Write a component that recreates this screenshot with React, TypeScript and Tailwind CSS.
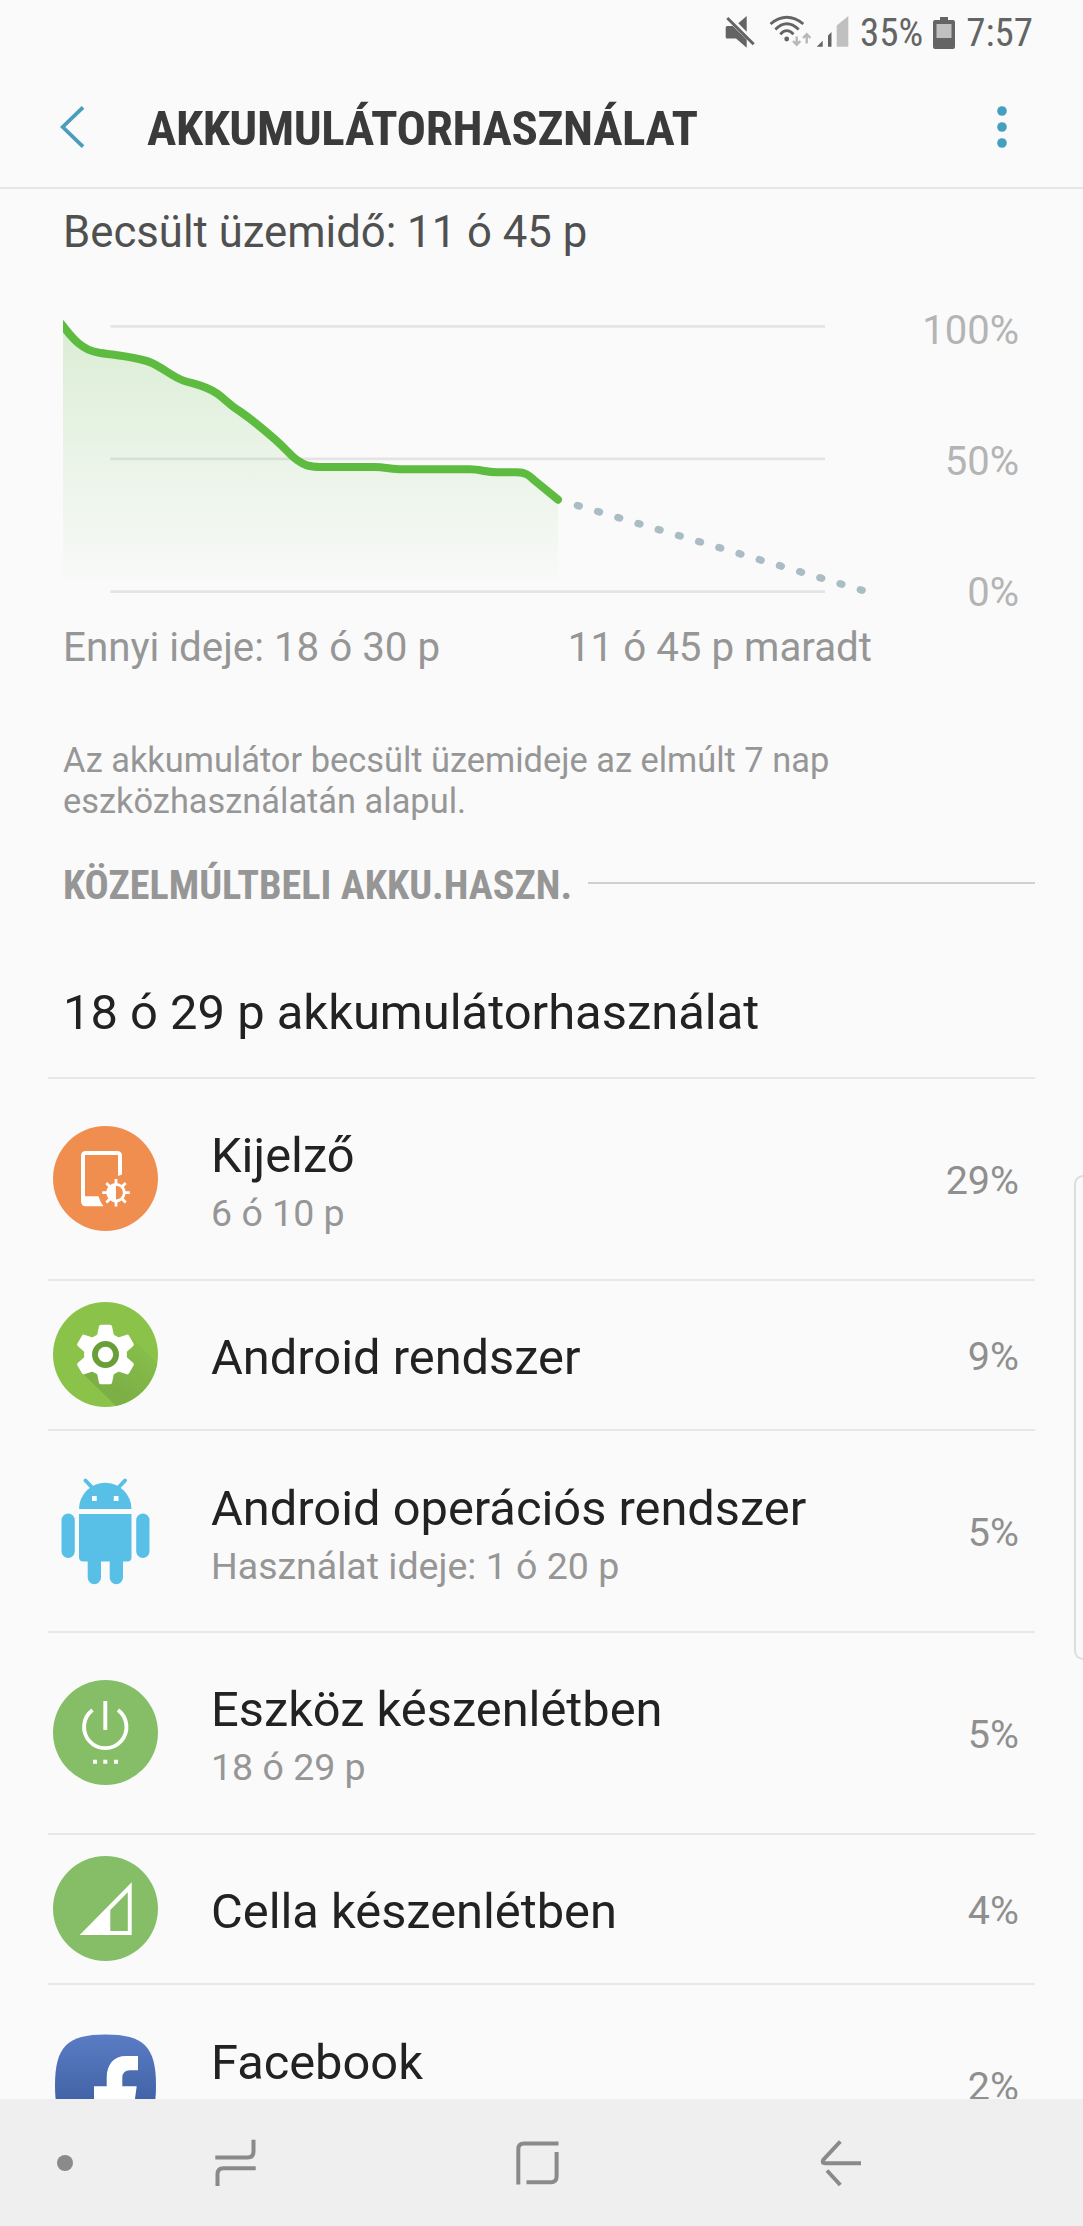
import { ReactNode } from "react";
import clsx from "clsx";

type UsageItem = {
  icon: ReactNode;
  name: string;
  detail?: string;
  percent: string;
};

function DisplayIcon() {
  return (
    <svg viewBox="0 0 105 105" className="size-[105px]">
      <circle cx="52.5" cy="52.5" r="52.5" fill="#f08e50" />
      <path
        fill="#fff"
        fillRule="evenodd"
        d="M33 25H64Q69 25 69 30V48.5L65 50V29H32V70.300H45.500Q47 76 50.500 80.300H33Q28 80.300 28 75.300V30Q28 25 33 25Z"
      />
      <path
        d="M63 53V80.500M49.200 66.700H76.800M53.300 57L72.700 76.400M72.700 57L53.300 76.400"
        stroke="#fff"
        strokeWidth="2.8"
      />
      <circle cx="63" cy="66.700" r="8.300" fill="#f08e50" stroke="#fff" strokeWidth="2.800" />
      <path d="M63 57.500A9.300 9.300 0 0 0 63 76Z" fill="#fff" />
    </svg>
  );
}

function SettingsIcon() {
  return (
    <svg viewBox="0 0 105 105" className="size-[105px]">
      <defs>
        <clipPath id="settings-disc">
          <circle cx="52.5" cy="52.5" r="52.5" />
        </clipPath>
        <linearGradient id="settings-shadow" x1="0.9" y1="0.1" x2="0.4" y2="0.7">
          <stop offset="0" stopColor="#88bf4a" />
          <stop offset="1" stopColor="#7cb046" />
        </linearGradient>
      </defs>
      <circle cx="52.5" cy="52.5" r="52.5" fill="#8bc34a" />
      <g clipPath="url(#settings-disc)">
        <path d="M79 36L105 62V105H64L27 69Z" fill="url(#settings-shadow)" />
      </g>
      <g fill="#fff">
        <circle cx="52.5" cy="52.5" r="21.5" />
        <path id="tooth" d="M43.500 36L46 24.200Q46.300 22.700 48 22.700H57Q58.700 22.700 59 24.200L61.500 36Z" />
        <use href="#tooth" transform="rotate(60 52.5 52.5)" />
        <use href="#tooth" transform="rotate(120 52.5 52.5)" />
        <use href="#tooth" transform="rotate(180 52.5 52.5)" />
        <use href="#tooth" transform="rotate(240 52.5 52.5)" />
        <use href="#tooth" transform="rotate(300 52.5 52.5)" />
      </g>
      <circle cx="52.5" cy="52.5" r="10.600" fill="#fff" stroke="#689f38" strokeWidth="5.800" />
    </svg>
  );
}

function AndroidIcon() {
  return (
    <svg viewBox="0 0 105 112" className="h-[112px] w-[105px]" fill="#58c0e6">
      <path d="M26 34A26.200 26.200 0 0 1 78.500 34Z" />
      <path d="M32.500 5.500L39.500 13M72 5.500L65 13" stroke="#58c0e6" strokeWidth="4" strokeLinecap="round" />
      <path d="M39 21H43.700V26H39ZM60.800 21H65.500V26H60.800Z" fill="#fff" />
      <path d="M26 39H78.500V82Q78.500 86.500 74 86.500H30.500Q26 86.500 26 82Z" />
      <rect x="8.500" y="38.500" width="13.300" height="44.500" rx="6.650" />
      <rect x="83.200" y="38.500" width="13.300" height="44.500" rx="6.650" />
      <path d="M34.700 84H48V102.500A6.650 6.650 0 0 1 34.700 102.500ZM56.700 84H70V102.500A6.650 6.650 0 0 1 56.700 102.500Z" />
    </svg>
  );
}

function StandbyIcon() {
  return (
    <svg viewBox="0 0 105 105" className="size-[105px]">
      <circle cx="52.5" cy="52.5" r="52.5" fill="#86be67" />
      <path
        d="M39.500 30A21.200 21.200 0 1 0 65 30M52.300 21V50"
        fill="none"
        stroke="#fff"
        strokeWidth="3.9"
      />
      <path d="M40 79.800H44V83.800H40ZM50.300 79.800H54.300V83.800H50.300ZM61 79.800H65V83.800H61Z" fill="#fff" />
    </svg>
  );
}

function CellIcon() {
  return (
    <svg viewBox="0 0 105 105" className="size-[105px]">
      <circle cx="52.5" cy="52.5" r="52.5" fill="#86be67" />
      <path fill="#fff" fillRule="evenodd" d="M78.700 26.300V79H26.700ZM74.800 36.300L57.300 54V75H74.800Z" />
    </svg>
  );
}

function FacebookIcon() {
  return (
    <svg viewBox="0 0 105 105" className="size-[105px]">
      <defs>
        <linearGradient id="fb" x1="0" y1="0" x2="0" y2="1">
          <stop offset="0" stopColor="#5a7cc4" />
          <stop offset="0.65" stopColor="#4263a6" />
          <stop offset="1" stopColor="#3b5998" />
        </linearGradient>
      </defs>
      <path
        fill="url(#fb)"
        d="M52.500 1.500C91 1.500 103 14 103 52.500S91 103 52.500 103S2 91 2 52.500S14 1.500 52.500 1.500Z"
      />
      <path
        fill="#fff"
        d="M53.700 103V69.500H41V53.300H53.700V45C53.700 31 61 23 73 23H85V37.300H77Q69.300 37.300 69.300 45V53.300H83.700L81.500 69.500H69.300V103Z"
      />
    </svg>
  );
}

const items: UsageItem[] = [
  { icon: <DisplayIcon />, name: "Kijelző", detail: "6 ó 10 p", percent: "29%" },
  { icon: <SettingsIcon />, name: "Android rendszer", percent: "9%" },
  {
    icon: <AndroidIcon />,
    name: "Android operációs rendszer",
    detail: "Használat ideje: 1 ó 20 p",
    percent: "5%",
  },
  { icon: <StandbyIcon />, name: "Eszköz készenlétben", detail: "18 ó 29 p", percent: "5%" },
  { icon: <CellIcon />, name: "Cella készenlétben", percent: "4%" },
  // the nav bar cuts this row off above its second line
  { icon: <FacebookIcon />, name: "Facebook", detail: "\u00a0", percent: "2%" },
];

function StatusIcons() {
  return (
    <svg viewBox="0 0 126 36" className="mr-[10px] h-[36px] w-[126px]" fill="#646464">
      <path d="M1.700 12.500Q1.700 11 3.200 11H8.800L22.700 24.500V32.700L12 23.500H3.200Q1.700 23.500 1.700 22ZM22.700 1V16.700L14.300 8.300Z" />
      <path d="M3.300 3L29.700 29.300" stroke="#646464" strokeWidth="3" />
      <g fill="none" stroke="#646464" strokeWidth="2.8">
        <path d="M46.500 9Q62.700 -4.500 79.300 9M51.300 14.500Q62.700 3 74.700 14.500M56.300 19.300Q62.700 12 69.500 19.300" />
      </g>
      <circle cx="62.700" cy="24" r="2.400" />
      <g fill="none" stroke="#b8b8b8" strokeWidth="2.4">
        <path d="M72.700 21.500V29.500M69 26L72.700 29.700L76.400 26M82.700 28.500V19.500M79 23L82.700 19.300L86.400 23" />
      </g>
      <path d="M92.700 31.700L98.700 25.700V31.700ZM104 20.500L107.500 17V31.700H104Z" />
      <path d="M112.700 10.500L124.300 1V31.700H112.700Z" fill="#c0c0c0" />
    </svg>
  );
}

function StatusBar() {
  return (
    <div className="flex h-[66px] items-center justify-end pr-[50px] font-['Roboto_Condensed',Roboto,sans-serif] text-[39px] text-[#646464]">
      <StatusIcons />
      <span className="pt-px">35%</span>
      <svg viewBox="0 0 22 32" className="mr-[11px] ml-[10px] h-[32px] w-[22px]">
        <path d="M7 0H15V3H20Q22 3 22 5V30Q22 32 20 32H2Q0 32 0 30V5Q0 3 2 3H7Z" fill="#646464" />
        <path d="M3.500 7H18.500V21H3.500Z" fill="#c0c0c0" />
      </svg>
      <span className="pt-px">7:57</span>
    </div>
  );
}

function Header() {
  return (
    <header className="flex h-[123px] items-center border-b-2 border-[#e6e6e6] pr-[76px] pl-[59px]">
      <svg viewBox="0 0 26 44" className="h-[44px] w-[26px]" fill="none" stroke="#4a9ebc" strokeWidth="3.8">
        <path d="M24 2.300L3.700 22L24 41.700" />
      </svg>
      <h1 className="ml-[62px] flex-1 pt-[5px] font-['Roboto_Condensed',Roboto,sans-serif] text-[49px] font-bold tracking-[-0.37px] text-[#3a3a3a]">
        AKKUMULÁTORHASZNÁLAT
      </h1>
      <svg viewBox="0 0 10 42" className="h-[42px] w-[10px]" fill="#459fbf">
        <circle cx="5" cy="5" r="4.800" />
        <circle cx="5" cy="21" r="4.800" />
        <circle cx="5" cy="37" r="4.800" />
      </svg>
    </header>
  );
}

const levelCurve =
  "C72 38 82 50 98 52.500C112 55 136 56.500 150.700 62.500C163 67.500 172 77 184.600 81C196 84.500 205 85.500 216.800 93.300C224 98.500 228 103 234.600 107.700C248 117 252 119 275.700 140C287 150 291 156 297 160C304 165 309 167 320 167H374C385 167 392 169.300 402 169.300H470C480 169.300 486 172.300 497 172.300H517C526 172.300 529 175.500 534 180L558 199.700";

function BatteryChart() {
  return (
    <div className="mt-[38px] flex h-[320px] justify-between pr-[64px]">
      <svg viewBox="0 0 900 320" className="h-[320px] w-[900px]" fill="none">
        <defs>
          <linearGradient id="level" gradientUnits="userSpaceOnUse" x1="0" y1="24" x2="0" y2="282">
            <stop offset="0" stopColor="#5dbb3f" stopOpacity="0.2" />
            <stop offset="1" stopColor="#5dbb3f" stopOpacity="0.01" />
          </linearGradient>
          <clipPath id="plot">
            <path d="M63 0H900V320H63Z" />
          </clipPath>
        </defs>
        <path d="M110.500 26.300H825M110.500 158.800H825M110.500 291.700H825" stroke="#e4e4e4" strokeWidth="2.8" />
        <path d={`M63 26${levelCurve}V280H63Z`} fill="url(#level)" />
        <path
          d={`M61 23.500L63 26${levelCurve}`}
          clipPath="url(#plot)"
          stroke="#5dbb3f"
          strokeWidth="8"
          strokeLinecap="round"
        />
        <path
          d="M577.400 205.400L863 290.500"
          stroke="#abbdc4"
          strokeWidth="7.3"
          strokeLinecap="round"
          strokeDasharray="2 19.080"
        />
      </svg>
      <div className="flex flex-col items-end gap-[85px] pt-[8px] text-[40px] leading-[46px] text-[#b4b4b4]">
        <span>100%</span>
        <span>50%</span>
        <span>0%</span>
      </div>
    </div>
  );
}

function UsageRow({ icon, name, detail, percent }: UsageItem) {
  return (
    <li
      className={clsx(
        "mx-[48px] flex shrink-0 items-center border-t-2 border-[#e8e8e8]",
        detail ? "h-[201.6px]" : "h-[150.8px]"
      )}
    >
      <div className="ml-[5px] w-[105px]">{icon}</div>
      <div className={clsx("ml-[53px] flex-1", detail ? "pt-[12px]" : "pt-[7px]")}>
        <div className="text-[48.8px] leading-[58px] text-[#222]">{name}</div>
        {detail && <div className="text-[37.5px] leading-[57px] text-[#969696]">{detail}</div>}
      </div>
      <span className="mr-[16px] pt-[3px] text-[39.5px] text-[#8f8f8f]">{percent}</span>
    </li>
  );
}

function NavBar() {
  return (
    <nav className="flex h-[127px] shrink-0 items-center bg-[#efefef] pl-[57px] text-[#8a8a8a]">
      <span className="size-4 rounded-full bg-[#8a8a8a]" />
      <svg viewBox="0 0 42 48" className="ml-[142px] h-[48px] w-[42px]" fill="none" stroke="currentColor" strokeWidth="4">
        <path d="M0.300 18.500H32.500Q38.500 18.500 38.500 12.500V0.800M40.700 29.200H8.500Q2.500 29.200 2.500 35.200V47" />
      </svg>
      <svg viewBox="0 0 44 46" className="ml-[259px] h-[46px] w-[44px]" fill="none" stroke="currentColor" strokeWidth="4">
        <path d="M42.500 3.500H8Q2.300 3.500 2.300 9.200V44.500M40.600 12V36.500Q40.600 42.300 34.800 42.300H10.500" />
      </svg>
      <svg viewBox="0 0 44 48" className="ml-[260px] h-[48px] w-[44px]" fill="none" stroke="currentColor" strokeWidth="4">
        <path d="M20.300 2.500L3.200 21Q1.500 24.200 5 24.200H41M7 31.500L20.300 46" />
      </svg>
    </nav>
  );
}

export default function App() {
  return (
    <div className="relative flex h-[2226px] w-[1083px] flex-col overflow-hidden bg-[#fafafa] font-[Roboto,sans-serif]">
      <StatusBar />
      <Header />
      <main className="min-h-0 flex-1 overflow-hidden">
        <p className="px-[63px] pt-[13px] text-[43.7px] leading-[60px] text-[#505050]">
          Becsült üzemidő: 11 ó 45 p
        </p>
        <BatteryChart />
        <div className="mt-[4px] flex justify-between pr-[211px] pl-[63px] text-[40.3px] leading-[48px] text-[#969696]">
          <span>Ennyi ideje: 18 ó 30 p</span>
          <span>11 ó 45 p maradt</span>
        </div>
        <p className="px-[63px] pt-[68px] text-[34.4px] leading-[41px] text-[#969696]">
          Az akkumulátor becsült üzemideje az elmúlt 7 nap
          <br />
          eszközhasználatán alapul.
        </p>
        <h2 className="mt-[40px] flex items-center pr-[48px] pl-[63px] font-['Roboto_Condensed',Roboto,sans-serif] text-[40.2px] leading-[48px] font-bold text-[#969696]">
          KÖZELMÚLTBELI AKKU.HASZN.
          <span className="mb-1.5 ml-4 h-0.5 flex-1 bg-[#d0d0d0]" />
        </h2>
        <p className="mt-[74px] px-[63px] text-[48.9px] leading-[58px] text-[#222]">
          18 ó 29 p akkumulátorhasználat
        </p>
        <ul className="mt-[35px]">
          {items.map((item) => (
            <UsageRow key={item.name} {...item} />
          ))}
        </ul>
      </main>
      <NavBar />
      {/* edge panel handle */}
      <div className="absolute top-[1175px] right-0 h-[485px] w-[9px] rounded-l-[10px] border-y-2 border-l-2 border-[#dedede]" />
    </div>
  );
}
